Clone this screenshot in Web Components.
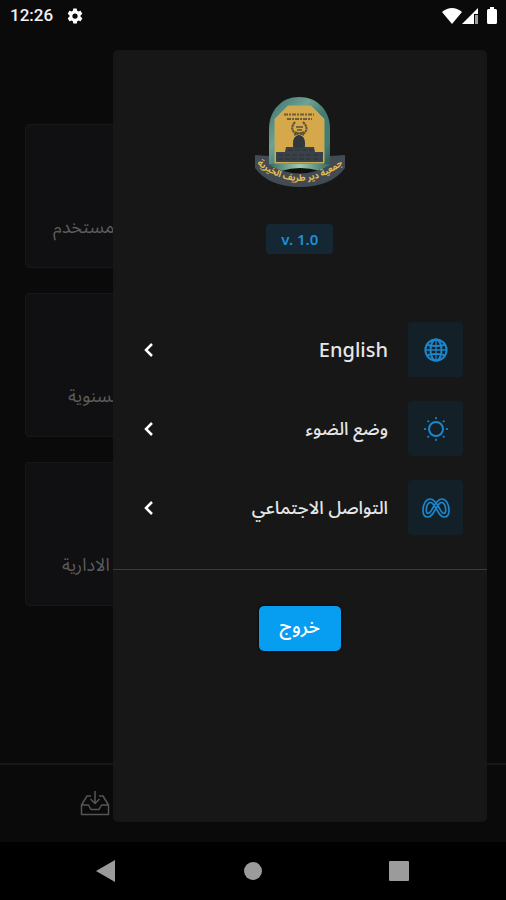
<!DOCTYPE html>
<html lang="ar" dir="rtl">
<head>
<meta charset="utf-8">
<meta name="viewport" content="width=device-width, initial-scale=1">
<title>الاعدادات</title>
<style>
  html, body { margin: 0; height: 100%; background: #000; }
  body { font-family: "Noto Sans", "Noto Sans Arabic", "DejaVu Sans", sans-serif; color: #e6e6e6; }
</style>
</head>
<body>
<app-screen>
  <status-bar slot="status"></status-bar>
  <dash-card style="--inset: 27px">المستخدم</dash-card>
  <dash-card style="--inset: 42px">السنوية</dash-card>
  <dash-card style="--inset: 36px">الادارية</dash-card>
  <tab-bar slot="tabs"></tab-bar>
  <side-drawer slot="overlay">
    <society-logo slot="head"></society-logo>
    <version-badge slot="head">v. 1.0</version-badge>
    <menu-row icon="globe" lang="en">English</menu-row>
    <menu-row icon="sun">وضع الضوء</menu-row>
    <menu-row icon="meta">التواصل الاجتماعي</menu-row>
    <primary-button slot="foot">خروج</primary-button>
  </side-drawer>
  <system-nav slot="nav"></system-nav>
</app-screen>
<script>
const define = (name, html) => customElements.define(name, class extends HTMLElement {
  constructor() {
    super();
    this.attachShadow({ mode: 'open' }).innerHTML = html;
  }
});

const icons = {
  globe: `<svg viewBox="0 0 24 24" width="24" height="24" stroke-width="2"><circle cx="12" cy="12" r="10.6"/><ellipse cx="12" cy="12" rx="5.5" ry="10.6"/><path d="M3.500 7Q12 9 20.500 7M3.500 17Q12 15 20.500 17"/><path stroke-width="1.3" d="M1.4 12H22.6M12 1.4V22.6"/></svg>`,
  sun: `<svg viewBox="0 0 24 24" width="24" height="24" stroke-width="2"><circle cx="12" cy="12" r="7"/><path stroke-linecap="round" d="M12 1V1.200M12 22.800V23M1 12H1.200M22.800 12H23M4.200 4.200L4.400 4.400M19.600 19.600L19.800 19.800M4.200 19.800L4.400 19.600M19.600 4.400L19.800 4.200"/></svg>`,
  meta: `<svg viewBox="0 0 28 20" width="28" height="20" stroke-width="1.7"><path d="M8.2 1C12.6 1 15.4 6.8 17.9 11.2C19.2 13.6 20.4 15.4 21.8 15.4C23.4 15.4 23.7 13.7 23.7 12C23.7 8 22 4.4 19.6 4.4C17.4 4.4 15.8 7.2 13.9 10.5C11.3 15.3 9.4 19 5.9 19C2.8 19 1 16.3 1 12.2C1 6.2 4 1 8.2 1Z"/><path d="M19.8 1C24 1 27 6.2 27 12.2C27 16.3 25.2 19 22.1 19C18.6 19 16.7 15.3 14.1 10.5C12.2 7.2 10.6 4.4 8.4 4.4C6 4.4 4.3 8 4.3 12C4.3 13.7 4.7 15.4 6.2 15.4C7.6 15.4 8.8 13.6 10.1 11.2C12.6 6.8 15.4 1 19.8 1Z"/></svg>`
};

define('app-screen', `
<style>
  :host { position: relative; display: flex; flex-direction: column; min-height: 100vh; background: #0a0a0a; overflow: hidden; }
  main { flex: 1; display: grid; grid-template-columns: 1fr 1fr; grid-auto-rows: 144px; align-content: start; gap: 25px; padding: 93px 25px 0; box-sizing: border-box; }
  ::slotted(dash-card) { grid-column: 2; }
</style>
<slot name="status"></slot>
<main><slot></slot></main>
<slot name="tabs"></slot>
<slot name="nav"></slot>
<slot name="overlay"></slot>`);

define('status-bar', `
<style>
  :host { display: flex; direction: ltr; align-items: center; justify-content: space-between; height: 31px; padding: 0 7px 0 10px; font: 500 17px/31px Roboto, sans-serif; color: #f2f2f2; }
  div { display: flex; align-items: center; }
  .left { gap: 13px; }
  svg { display: block; fill: #fff; }
</style>
<div class="left"><span>12:26</span>
  <svg width="18" height="18" viewBox="0 0 24 24"><path d="M19.4 13c.1-.3.1-.7.1-1s0-.7-.1-1l2.1-1.600c.2-.2.2-.4.1-.6l-2-3.500c-.1-.2-.4-.3-.6-.2l-2.500 1a7 7 0 0 0-1.700-1l-.4-2.600A.5.5 0 0 0 14 2h-4a.5.5 0 0 0-.5.4L9.200 5.100a8 8 0 0 0-1.700 1L5 5.100c-.2-.1-.5 0-.6.2l-2 3.500c-.1.2-.1.5.1.6L4.600 11a8 8 0 0 0 0 2l-2.100 1.600c-.2.2-.2.4-.1.6l2 3.500c.1.2.4.3.6.2l2.500-1a7 7 0 0 0 1.700 1l.4 2.600c0 .3.2.5.4.5h4c.3 0 .5-.2.5-.4l.4-2.700a8 8 0 0 0 1.700-1l2.500 1c.2.1.5 0 .6-.2l2-3.500c.1-.2.1-.5-.1-.6zM12 15.500a3.500 3.500 0 1 1 0-7 3.500 3.500 0 0 1 0 7z"/></svg>
</div>
<div>
  <svg width="57" height="18" viewBox="0 0 57 18"><path d="M0 5Q10 -3 20 5L10 17Z"/><path d="M20 17L36 1V7H32V17Z"/><path d="M33 8H36V17H33Z" opacity=".6"/><path d="M48 0H52V2H53.500Q55 2 55 3.500V15.500Q55 17 53.500 17H46.500Q45 17 45 15.500V3.500Q45 2 46.500 2H48Z"/></svg>
</div>`);

define('dash-card', `
<style>
  :host { display: flex; flex-direction: column; justify-content: flex-end; box-sizing: border-box; border: 1px solid #171717; border-radius: 4px; background: #101012; color: #5c5c5c; padding: 0 0 25px; }
  p { margin: 0; padding-left: var(--inset); text-align: left; font-size: 18px; line-height: 32px; }
</style>
<p><slot></slot></p>`);

define('tab-bar', `
<style>
  :host { display: flex; justify-content: flex-end; align-items: center; box-sizing: border-box; height: 79px; border-top: 2px solid #171717; padding-left: 80px; }
  button { display: block; border: 0; padding: 0 0 2px; background: none; color: #555; }
  svg { display: block; fill: none; stroke: currentColor; stroke-width: 1.5; stroke-linejoin: round; }
</style>
<button aria-label="الوارد"><svg width="30" height="26" viewBox="0 0 30 26"><path d="M11 6H7L1.500 15V24.500H28.500V15L23 6H19M1.500 15H8.500L11 19.500H19L21.500 15H28.500M15 1V13M10.500 9L15 13.500L19.500 9"/></svg></button>`);

define('system-nav', `
<style>
  :host { display: flex; direction: ltr; justify-content: space-between; align-items: center; height: 58px; padding: 0 96px; background: #000; }
  button { display: block; border: 0; padding: 0; background: none; }
  svg { display: block; fill: #9b9b9b; }
</style>
<button aria-label="Back"><svg width="22" height="22"><path d="M0 11L19 0V22Z"/></svg></button>
<button aria-label="Home"><svg width="20" height="20"><circle cx="10" cy="10" r="9"/></svg></button>
<button aria-label="Recents"><svg width="22" height="20"><rect x="1" width="20" height="20" rx="1"/></svg></button>`);

define('side-drawer', `
<style>
  :host { position: absolute; top: 50px; bottom: 78px; right: 19px; width: 74%; display: flex; flex-direction: column; background: #171717; border-radius: 5px; }
  header { display: flex; flex-direction: column; align-items: center; gap: 36px; padding-top: 46px; }
  nav { display: flex; flex-direction: column; gap: 24px; padding: 68px 24px 34px 29px; }
  hr { width: 100%; margin: 0; border: 0; border-top: 1px solid #3b3b3b; }
  footer { display: flex; justify-content: center; padding-top: 36px; }
</style>
<header><slot name="head"></slot></header>
<nav><slot></slot></nav>
<hr>
<footer><slot name="foot"></slot></footer>`);

define('society-logo', `
<style>
  :host { display: block; }
  svg { display: block; overflow: visible; }
  text { font: bold 9px "Noto Sans Arabic", "Noto Sans", "DejaVu Sans", sans-serif; fill: #e3bd55; }
</style>
<svg width="92" height="92" viewBox="0 0 92 92" role="img" aria-label="شعار الجمعية">
  <defs>
    <linearGradient id="frame" x2="1" y2="1"><stop stop-color="#3c6e69"/><stop offset=".35" stop-color="#6fa292"/><stop offset=".55" stop-color="#457c71"/><stop offset=".8" stop-color="#467d72"/><stop offset="1" stop-color="#244f4a"/></linearGradient>
    <linearGradient id="base"><stop stop-color="#36685f"/><stop offset=".5" stop-color="#9bcbb1"/><stop offset="1" stop-color="#36685f"/></linearGradient>
    <path id="arc" d="M4 69Q46 101 88 69"/>
  </defs>
  <path fill="url(#frame)" d="M15 75V33C15 14 28 1 45 1C63 1 76 14 76 33V75Z"/>
  <path fill="url(#base)" d="M15 68H76V75H15Z"/>
  <path fill="#d5a84b" stroke="#bfae60" d="M21 67V23L34 10H57L70 23V67Z"/>
  <path fill="#101010" d="M27 75Q46 69 66 75V82H27Z"/>
  <path fill="#424b53" d="M1 59L15 60V69Q46 86 76 69V60L91 59V72Q77 91 46 91Q15 91 1 72Z"/>
  <path fill="none" stroke="#725c32" stroke-width="2" stroke-dasharray="4 1 2 1" d="M30 18.500H60M33 23H58"/>
  <path fill="none" stroke="#5d5136" stroke-width="2" stroke-dasharray="2.500 .5" d="M41 26Q35 33 42 38M49 26Q56 33 49 38"/>
  <path fill="none" stroke="#5d5136" stroke-width="1.500" d="M42 31H49M43 34H48M40 39L50 36M50 39L41 36"/>
  <path fill="#3a4249" d="M39 48Q39 40 45 39Q51 40 51 48V51H60L61 56H69V66H22V56H31L32 51H39Z"/>
  <path fill="#30383e" d="M39 48Q39 40 45 39Q51 40 51 48L49 52H41Z"/>
  <path stroke="#2b3339" stroke-width="1" stroke-dasharray="5 2" d="M24 59H67M24 63H67M34 54H59"/>
  <text text-anchor="middle"><textPath href="#arc" startOffset="50%">جمعية دير طريف الخيرية</textPath></text>
</svg>`);

define('version-badge', `
<style>
  :host { display: block; padding: 0 15px; border-radius: 4px; background: #142733; color: #1e8fd5; direction: ltr; font-size: 15px; font-weight: 600; line-height: 30px; }
</style>
<slot></slot>`);

customElements.define('menu-row', class extends HTMLElement {
  constructor() {
    super();
    this.attachShadow({ mode: 'open' }).innerHTML = `
<style>
  :host { display: block; font-size: 18px; font-weight: 500; }
  :host([lang="en"]) { font-size: 20px; }
  button { display: flex; align-items: center; width: 100%; border: 0; padding: 0; background: none; font: inherit; line-height: 32px; color: inherit; text-align: start; }
  .tile { display: grid; place-items: center; width: 55px; height: 55px; border-radius: 4px; background: #142028; color: #1b86cb; }
  .tile svg { display: block; fill: none; stroke: currentColor; }
  .label { flex: 1; padding: 0 20px 2px 0; }
  :host([lang="en"]) .label { padding-bottom: 0; }
  .chevron { display: block; fill: none; stroke: #fff; stroke-width: 2.500; }
</style>
<button>
  <span class="tile"></span>
  <span class="label"><slot></slot></span>
  <svg class="chevron" width="12" height="16" viewBox="0 0 12 16"><path d="M10 2L4 8L10 14"/></svg>
</button>`;
  }
  connectedCallback() {
    this.shadowRoot.querySelector('.tile').innerHTML = icons[this.getAttribute('icon')];
  }
});

define('primary-button', `
<style>
  :host { display: block; }
  button { display: block; border: 0; border-radius: 5px; padding: 0 21px 5px; background: #079df0; color: #fff; font: inherit; font-size: 19px; font-weight: 500; line-height: 40px; box-shadow: 0 0 3px #000; }
</style>
<button><slot></slot></button>`);
</script>
</body>
</html>
